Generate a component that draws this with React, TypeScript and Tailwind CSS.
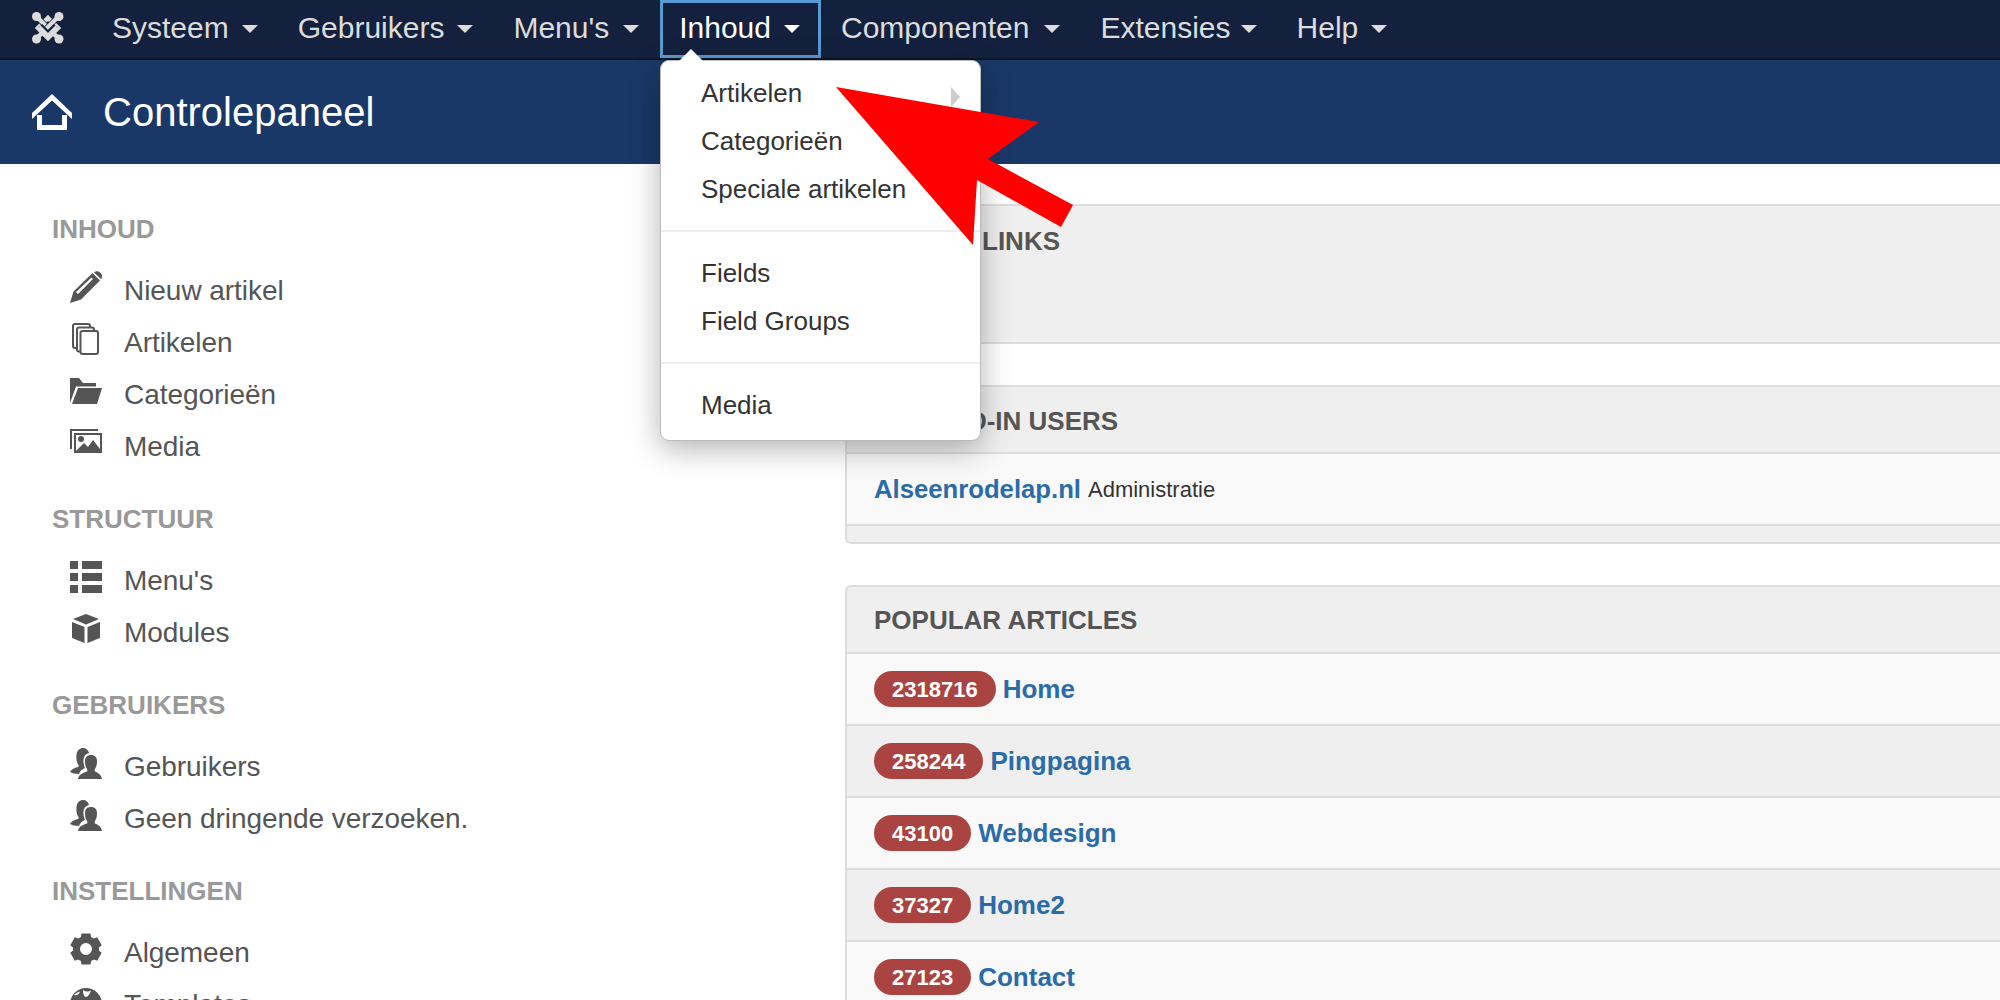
const navItems = [
  { label: "Systeem", caret: "ml-[13px]" },
  { label: "Gebruikers", caret: "ml-[13px]" },
  { label: "Menu's", caret: "ml-[14px]" },
  { label: "Inhoud", caret: "ml-[13px]" },
  { label: "Componenten", caret: "ml-[15px]" },
  { label: "Extensies", caret: "ml-[10px]" },
  { label: "Help", caret: "ml-[13px]" },
]

function JoomlaLogo() {
  return (
    <svg viewBox="0 0 32 32" className="h-8 w-8" fill="none">
      <path d="M16 6 L26 16 L16 26 L6 16 Z" stroke="#dcdcdc" strokeWidth="4.5" />
      <path d="M4 27 L13 18 M27 27 L18 18" stroke="#dcdcdc" strokeWidth="4.5" />
      <path d="M5 5 L21 21" stroke="#13213f" strokeWidth="6" />
      <path d="M4 4 L22 22" stroke="#dcdcdc" strokeWidth="4.5" />
      <path d="M26 5 L10 21" stroke="#13213f" strokeWidth="6" />
      <path d="M27 4 L9 22" stroke="#dcdcdc" strokeWidth="4.5" />
      <path d="M8 14 L18 24 M24 14 L14 24" stroke="#13213f" strokeWidth="6" />
      <path d="M7 15 L17 25 M25 15 L15 25" stroke="#dcdcdc" strokeWidth="4.5" />
      <g fill="#dcdcdc">
        <circle cx="4.500" cy="4.500" r="4.500" />
        <circle cx="27" cy="4.500" r="4.500" />
        <circle cx="4.500" cy="27" r="4.500" />
        <circle cx="27" cy="27" r="4.500" />
      </g>
    </svg>
  )
}

function HomeIcon() {
  return (
    <svg viewBox="0 0 40 36" className="h-9 w-10" fill="#fff">
      <path d="M20 0 L40 19 V25 L20 6.5 L0 25 V19 Z" />
      <path d="M5 21 H10 V31 H30 V21 H35 V36 H5 Z" />
    </svg>
  )
}

const PencilIcon = () => (
  <svg viewBox="0 0 32 32" className="h-8 w-8" fill="#555">
    <path
      fillRule="evenodd"
      d="M0 32 L3.5 20.5 L22.5 2 L30 9.5 L11 28.5 Z M6 21 L8 23 L23 8 L21.5 6.5 Z"
    />
    <path d="M24 1.5 C26 -0.5 28.5 0 30.5 2 C32.5 4 32.5 6 31 8 Z" />
  </svg>
)

const FilesIcon = () => (
  <svg viewBox="0 0 32 32" className="h-8 w-8" fill="#fff" stroke="#555" strokeWidth="2">
    <rect x="3" y="1" width="17" height="24" rx="2" />
    <rect x="7" y="4.5" width="17" height="24" rx="2" />
    <rect x="10.5" y="8" width="17.5" height="23" rx="2" />
  </svg>
)

const FolderIcon = () => (
  <svg viewBox="0 0 32 32" className="h-8 w-8" fill="#555">
    <path d="M0 3 H9 L13 8 H26 V11.5 H6 L0 28 Z" />
    <path d="M8 13 H32 L27 29 H2 Z" />
  </svg>
)

const ImageIcon = () => (
  <svg viewBox="0 0 32 32" className="h-8 w-8" fill="#555">
    <path d="M0 2 H28 V4 H2 V22 H0 Z" />
    <path fillRule="evenodd" d="M4 6 H32 V26 H4 Z M6 8 V24 H30 V8 Z" />
    <circle cx="11" cy="12" r="3" />
    <path d="M6 24 L14 16 L18 20 L23 13 L30 22 V24 Z" />
  </svg>
)

const ListIcon = () => (
  <svg viewBox="0 0 32 32" className="h-8 w-8" fill="#555">
    <path d="M0 0 H8 V8 H0 Z M12 0 H32 V8 H12 Z M0 12 H8 V20 H0 Z M12 12 H32 V20 H12 Z M0 24 H8 V32 H0 Z M12 24 H32 V32 H12 Z" />
  </svg>
)

const CubeIcon = () => (
  <svg viewBox="0 0 32 32" className="h-8 w-8" fill="#555">
    <path d="M16 1 L29 6 L16 11.5 L3 6 Z" />
    <path d="M2 9 L14.5 14 V30 L2 25 Z" />
    <path d="M30 9 L17.5 14 V30 L30 25 Z" />
  </svg>
)

const UsersIcon = () => (
  <svg viewBox="0 0 32 32" className="h-8 w-8" fill="#555">
    <path d="M0 25 C2 21 7 21 9 19 C7 16 6 13 6.500 8 C7 3 10 1 13 1 C16 1 18.500 3 19 6 C15 7 13 10 13.500 15 C13.800 18 14.500 20 15 21 C12 22 10 24 9 27 C5 27 2 26 0 25 Z" />
    <path d="M8 32 C9 27 13 26 17 24.500 C17.500 24 17.500 23 17 22 C15.500 20 15 17 15 14 C15 10 17.500 8 21 8 C24.500 8 27 10 27 14 C27 17 26.500 20 25 22 C24.500 23 24.500 24 25 24.500 C28 26 31 27 32 32 Z" />
  </svg>
)

const GearIcon = () => (
  <svg viewBox="0 0 32 32" className="h-8 w-8" fill="#555">
    <circle cx="16" cy="16" r="9.500" fill="none" stroke="#555" strokeWidth="7" />
    <path d="M11.500 0.500 H20.500 L21.500 6 H10.500 Z" />
    <path d="M11.500 0.500 H20.500 L21.500 6 H10.500 Z" transform="rotate(60 16 16)" />
    <path d="M11.500 0.500 H20.500 L21.500 6 H10.500 Z" transform="rotate(120 16 16)" />
    <path d="M11.500 0.500 H20.500 L21.500 6 H10.500 Z" transform="rotate(180 16 16)" />
    <path d="M11.500 0.500 H20.500 L21.500 6 H10.500 Z" transform="rotate(240 16 16)" />
    <path d="M11.500 0.500 H20.500 L21.500 6 H10.500 Z" transform="rotate(300 16 16)" />
  </svg>
)

const GlobeIcon = () => (
  <svg viewBox="0 0 32 32" className="mt-[3px] h-8 w-8" fill="#555">
    <circle cx="16" cy="16" r="16" />
    <path d="M13 2 C16 4 19 4 21 2.500 C20 6 18 9 16 9 C14 9 13 6 13 2 Z" fill="#fff" />
    <path d="M4 7 C6 5 8 4 10 3.500 C9 6 7 8 4 7 Z" fill="#fff" />
  </svg>
)

const sidebar = [
  {
    title: "INHOUD",
    items: [
      { label: "Nieuw artikel", icon: <PencilIcon /> },
      { label: "Artikelen", icon: <FilesIcon /> },
      { label: "Categorieën", icon: <FolderIcon /> },
      { label: "Media", icon: <ImageIcon /> },
    ],
  },
  {
    title: "STRUCTUUR",
    items: [
      { label: "Menu's", icon: <ListIcon /> },
      { label: "Modules", icon: <CubeIcon /> },
    ],
  },
  {
    title: "GEBRUIKERS",
    items: [
      { label: "Gebruikers", icon: <UsersIcon /> },
      { label: "Geen dringende verzoeken.", icon: <UsersIcon /> },
    ],
  },
  {
    title: "INSTELLINGEN",
    items: [
      { label: "Algemeen", icon: <GearIcon /> },
      { label: "Templates", icon: <GlobeIcon /> },
    ],
  },
]

const popular = [
  { count: "2318716", title: "Home" },
  { count: "258244", title: "Pingpagina" },
  { count: "43100", title: "Webdesign" },
  { count: "37327", title: "Home2" },
  { count: "27123", title: "Contact" },
]

function DropdownMenu() {
  return (
    <div className="absolute left-[660px] top-[60px] w-[321px] rounded-[9px] border border-[#bbb] bg-white pt-[8px] pb-[11px] text-[26px] text-[#333] shadow-[0_8px_30px_rgba(0,0,0,0.3)]">
      <div className="absolute -top-[12px] left-[18px] h-0 w-0 border-x-[12px] border-b-[12px] border-x-transparent border-b-white" />
      <div className="relative flex h-[48px] items-center pl-[40px]">
        Artikelen
        <div className="absolute left-[290px] top-[18px] h-0 w-0 border-y-[10px] border-l-[9px] border-y-transparent border-l-[#ccc]" />
      </div>
      <div className="flex h-[48px] items-center pl-[40px]">Categorieën</div>
      <div className="flex h-[48px] items-center pl-[40px]">Speciale artikelen</div>
      <div className="my-[17px] h-[2px] bg-[#eee]" />
      <div className="flex h-[48px] items-center pl-[40px]">Fields</div>
      <div className="flex h-[48px] items-center pl-[40px]">Field Groups</div>
      <div className="my-[17px] h-[2px] bg-[#eee]" />
      <div className="flex h-[48px] items-center pl-[40px]">Media</div>
    </div>
  )
}

export default function App() {
  return (
    <div className="relative h-[1000px] w-[2000px] overflow-hidden bg-white font-['Liberation_Sans',Arial,sans-serif]">
      <nav className="flex h-[60px] items-start border-b-2 border-[#0c1528] bg-[#13213f] pl-[32px]">
        <div className="mr-[28px] mt-[12px]">
          <JoomlaLogo />
        </div>
        {navItems.map((item) => {
          const active = item.label === "Inhoud"
          return (
            <div
              key={item.label}
              className={
                active
                  ? "ml-[1px] flex h-[58px] items-center border-[3px] border-[#5a9ad2] pb-[3px] pl-[16px] pr-[18px] text-[30px] text-white"
                  : "flex h-[58px] items-center px-[20px] pb-[4px] text-[30px] text-[#dcdcdc]"
              }
            >
              {item.label}
              <span
                className={`${item.caret} mt-[3px] h-0 w-0 border-x-[8px] border-t-[8px] border-x-transparent ${active ? "border-t-white" : "border-t-[#dcdcdc]"}`}
              />
            </div>
          )
        })}
      </nav>

      <header className="flex h-[104px] items-center bg-[#1a3867] pl-[32px]">
        <HomeIcon />
        <h1 className="ml-[31px] text-[40px] text-white">Controlepaneel</h1>
      </header>

      <main className="flex">
        <aside className="w-[845px] shrink-0 pl-[52px] pt-[49px]">
          {sidebar.map((section) => (
            <section key={section.title} className="mb-[30px]">
              <h2 className="mb-[20px] flex h-[32px] items-center text-[26px] font-bold text-[#999]">{section.title}</h2>
              {section.items.map((item) => (
                <div key={item.label} className="flex h-[52px] items-center pl-[18px] text-[28px] text-[#555]">
                  <span className="-mt-[8px] h-8 w-8">{item.icon}</span>
                  <span className="ml-[22px] -tracking-[0.05px]">{item.label}</span>
                </div>
              ))}
            </section>
          ))}
        </aside>

        <div className="w-[1300px] shrink-0 pt-[40px]">
          <section className="h-[140px] rounded-t-[6px] border-2 border-r-0 border-[#ddd] bg-[#efefef] pl-[27px] pt-[16px] text-[26px] font-bold text-[#555] [word-spacing:17px]">
            QUICK LINKS
          </section>

          <section className="mt-[41px] overflow-hidden rounded-[6px] border-2 border-r-0 border-[#ddd] bg-[#efefef]">
            <div className="flex h-[67px] items-center border-b-2 border-[#ddd] pl-[27px] pt-[3px] text-[26px] font-bold text-[#555]">
              LOGGED-IN USERS
            </div>
            <div className="flex h-[72px] items-center border-b-2 border-[#ddd] bg-[#f9f9f9] pl-[27px]">
              <a className="text-[25.7px] font-bold text-[#2b6ca8]">Alseenrodelap.nl</a>
              <span className="ml-[7px] text-[22px] text-[#333]">Administratie</span>
            </div>
            <div className="h-[16px]" />
          </section>

          <section className="mt-[41px] rounded-t-[6px] border-2 border-r-0 border-[#ddd] bg-[#efefef]">
            <div className="flex h-[67px] items-center border-b-2 border-[#ddd] pl-[27px] pt-[2px] text-[26px] font-bold text-[#555]">
              POPULAR ARTICLES
            </div>
            {popular.map((row, i) => (
              <div
                key={row.title}
                className={
                  i % 2 === 0
                    ? "flex h-[72px] items-center border-b-2 border-[#ddd] bg-[#f9f9f9] pl-[27px]"
                    : "flex h-[72px] items-center border-b-2 border-[#ddd] bg-[#efefef] pl-[27px]"
                }
              >
                <span className="flex h-[36px] items-center rounded-[18px] bg-[#a94442] px-[18px] text-[22px] font-bold text-white">
                  {row.count}
                </span>
                <a className="ml-[7px] text-[26px] font-bold text-[#2b6ca8]">{row.title}</a>
              </div>
            ))}
          </section>
        </div>
      </main>

      <DropdownMenu />

      <svg className="pointer-events-none absolute left-0 top-0 h-[300px] w-[1200px]" viewBox="0 0 1200 300">
        <polygon points="836,87 1039,122 988,159 1073,205 1061,227 977,180 973,245" fill="#fe0000" />
      </svg>
    </div>
  )
}
